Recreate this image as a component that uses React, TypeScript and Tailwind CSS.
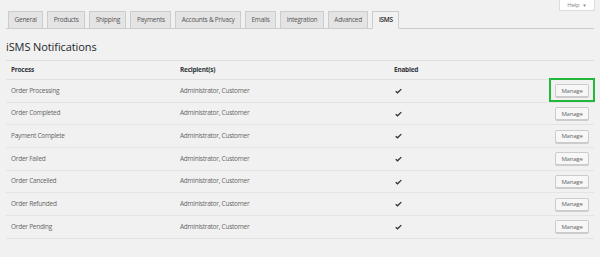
import React from "react";

const tabs = ["General", "Products", "Shipping", "Payments", "Accounts & Privacy", "Emails", "Integration", "Advanced", "iSMS"];
const rows = ["Order Processing", "Order Completed", "Payment Complete", "Order Failed", "Order Cancelled", "Order Refunded", "Order Pending"];

function Check() {
  return (
    <svg width="7" height="6" viewBox="0 0 7 6" className="block">
      <path d="M0.7 3.3 L2.5 4.8 L6.3 1.1" fill="none" stroke="#333" strokeWidth="1.3" />
    </svg>
  );
}

export default function App() {
  return (
    <div className="w-[600px] h-[257px] bg-[#f1f1f1] overflow-hidden relative" style={{ fontFamily: '"Open Sans", "Noto Sans", sans-serif' }}>
      <div className="flex justify-end pr-[5px]">
        <div className="w-[36px] h-[11px] bg-white border border-[#ddd] border-t-0 text-[6px] text-[#888] flex items-center justify-center gap-[3px] leading-none">
          <span className="tracking-[-0.2px]">Help</span>
          <span className="text-[4.5px]">▼</span>
        </div>
      </div>
      <div className="mx-[6px] flex items-end gap-[4px] pl-[2px] border-b border-[#ccc] h-[18px]">
        {tabs.map((t) => {
          const active = t === "iSMS";
          return (
            <div
              key={t}
              className={
                active
                  ? "h-[18px] -mb-px px-[5.5px] flex items-center border border-[#ccc] border-b-[#f1f1f1] bg-[#f1f1f1] text-[6.5px] tracking-[-0.25px] font-semibold text-[#222] leading-none"
                  : "h-[17px] px-[5.5px] flex items-center border border-[#ccc] border-b-0 bg-[#e4e4e4] text-[6.5px] tracking-[-0.25px] text-[#555] leading-none"
              }
            >
              {t}
            </div>
          );
        })}
      </div>
      <div className="mx-[6px] mt-[12px] text-[11px] tracking-[-0.1px] text-[#23282d] leading-none h-[19px]">iSMS Notifications</div>
      <div className="mx-[6px] border-t border-[#ddd]">
        <div className="flex items-center h-[19px] border-b border-[#e1e1e1] text-[6.5px] tracking-[-0.25px] font-bold text-[#32373c] leading-none">
          <div className="w-[170px] pl-[5px]">Process</div>
          <div className="w-[215px] pl-[4px]">Recipient(s)</div>
          <div className="pl-[3px]">Enabled</div>
        </div>
        {rows.map((r, i) => (
          <div key={r} className="flex items-center h-[22.7px] border-b border-[#e4e4e4] text-[6.5px] tracking-[-0.25px] text-[#666] leading-none">
            <div className="w-[170px] pl-[5px]">{r}</div>
            <div className="w-[215px] pl-[4px]">Administrator, Customer</div>
            <div className="pl-[4px] flex-1">
              <Check />
            </div>
            <div className="pr-[5px] relative">
              <div className="w-[34px] h-[13px] bg-[#f7f7f7] border border-[#ccc] rounded-[2px] shadow-[0_1px_0_#ccc] text-[6px] tracking-[-0.2px] text-[#666] flex items-center justify-center">
                Manage
              </div>
              {i === 0 && (
                <div className="absolute -left-[6px] -top-[6px] w-[46px] h-[24px] border-[2.5px] border-[#22b63a]" />
              )}
            </div>
          </div>
        ))}
      </div>
    </div>
  );
}
